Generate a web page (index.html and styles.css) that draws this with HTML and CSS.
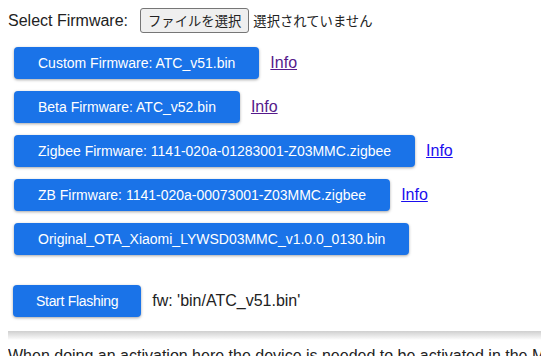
FILE: index.html
```html
<!DOCTYPE html>
<html lang="en">
<head>
    <meta charset="UTF-8">
    <meta name="viewport" content="width=device-width, initial-scale=1.0">
    <title>Telink Flasher</title>
    <link rel="stylesheet" href="styles.css">
</head>
<body>

    <!-- Firmware picker -->
    <div class="picker">
        <span class="picker-label">Select Firmware:</span>
        <label class="file-input">
            <span class="file-btn">ファイルを選択</span>
            <span class="file-name">選択されていません</span>
        </label>
    </div>

    <!-- Firmware list -->
    <div class="fw-list">
        <div class="fw-row">
            <button class="btn">Custom Firmware: ATC_v51.bin</button>
            <a href="#" class="info visited">Info</a>
        </div>
        <div class="fw-row">
            <button class="btn">Beta Firmware: ATC_v52.bin</button>
            <a href="#" class="info visited">Info</a>
        </div>
        <div class="fw-row">
            <button class="btn">Zigbee Firmware: 1141-020a-01283001-Z03MMC.zigbee</button>
            <a href="#" class="info">Info</a>
        </div>
        <div class="fw-row">
            <button class="btn">ZB Firmware: 1141-020a-00073001-Z03MMC.zigbee</button>
            <a href="#" class="info">Info</a>
        </div>
        <div class="fw-row">
            <button class="btn">Original_OTA_Xiaomi_LYWSD03MMC_v1.0.0_0130.bin</button>
        </div>

        <div class="fw-row flash-row">
            <button class="btn btn-flash">Start Flashing</button>
            <span class="fw-path">fw: 'bin/ATC_v51.bin'</span>
        </div>
    </div>

    <div class="divider"></div>

    <p class="note">When doing an activation here the device is needed to be activated in the Mi Home app first</p>

</body>
</html>
```

FILE: styles.css
```css
html {
    overflow: hidden;
}
body {
    margin: 8px;
    font-family: "Liberation Sans", Arial, sans-serif;
    font-size: 16px;
    color: #222;
    background: #fff;
}

/* Picker */
.picker {
    display: flex;
    align-items: center;
    gap: 12px;
    height: 25px;
}
.file-input {
    display: flex;
    align-items: center;
    gap: 4px;
    font-family: "Noto Sans CJK JP", sans-serif;
    font-size: 13.333px;
    color: #222;
}
.file-btn {
    display: inline-block;
    height: 25px;
    line-height: 23px;
    padding: 0 7px;
    box-sizing: border-box;
    border: 1px solid #767676;
    border-radius: 3px;
    background: #efefef;
}

/* Firmware list */
.fw-list {
    display: flex;
    flex-direction: column;
    gap: 12px;
    margin-top: 14px;
    padding-left: 6px;
}
.fw-row {
    display: flex;
    align-items: center;
    gap: 11px;
}
.flash-row {
    margin-top: 18px;
    margin-left: -1px;
}
.btn {
    height: 32px;
    padding: 0 24px;
    border: none;
    border-radius: 4px;
    background: #1a73e8;
    color: #fff;
    font-family: "Liberation Sans", Arial, sans-serif;
    font-size: 14px;
    box-shadow: 0 1px 3px rgba(0, 0, 0, 0.35);
    cursor: pointer;
}
.btn-flash {
    padding: 0 23px;
    letter-spacing: -0.3px;
}
.info {
    color: #1a0dee;
    font-size: 16px;
}
.info.visited {
    color: #551a8b;
}

/* Bottom */
.divider {
    height: 9px;
    margin: 14px -8px 0 0;
    background: linear-gradient(#cfcfcf, #f4f4f4 80%, #fff);
}
.note {
    margin: 7px 0 0;
    white-space: nowrap;
}
```
